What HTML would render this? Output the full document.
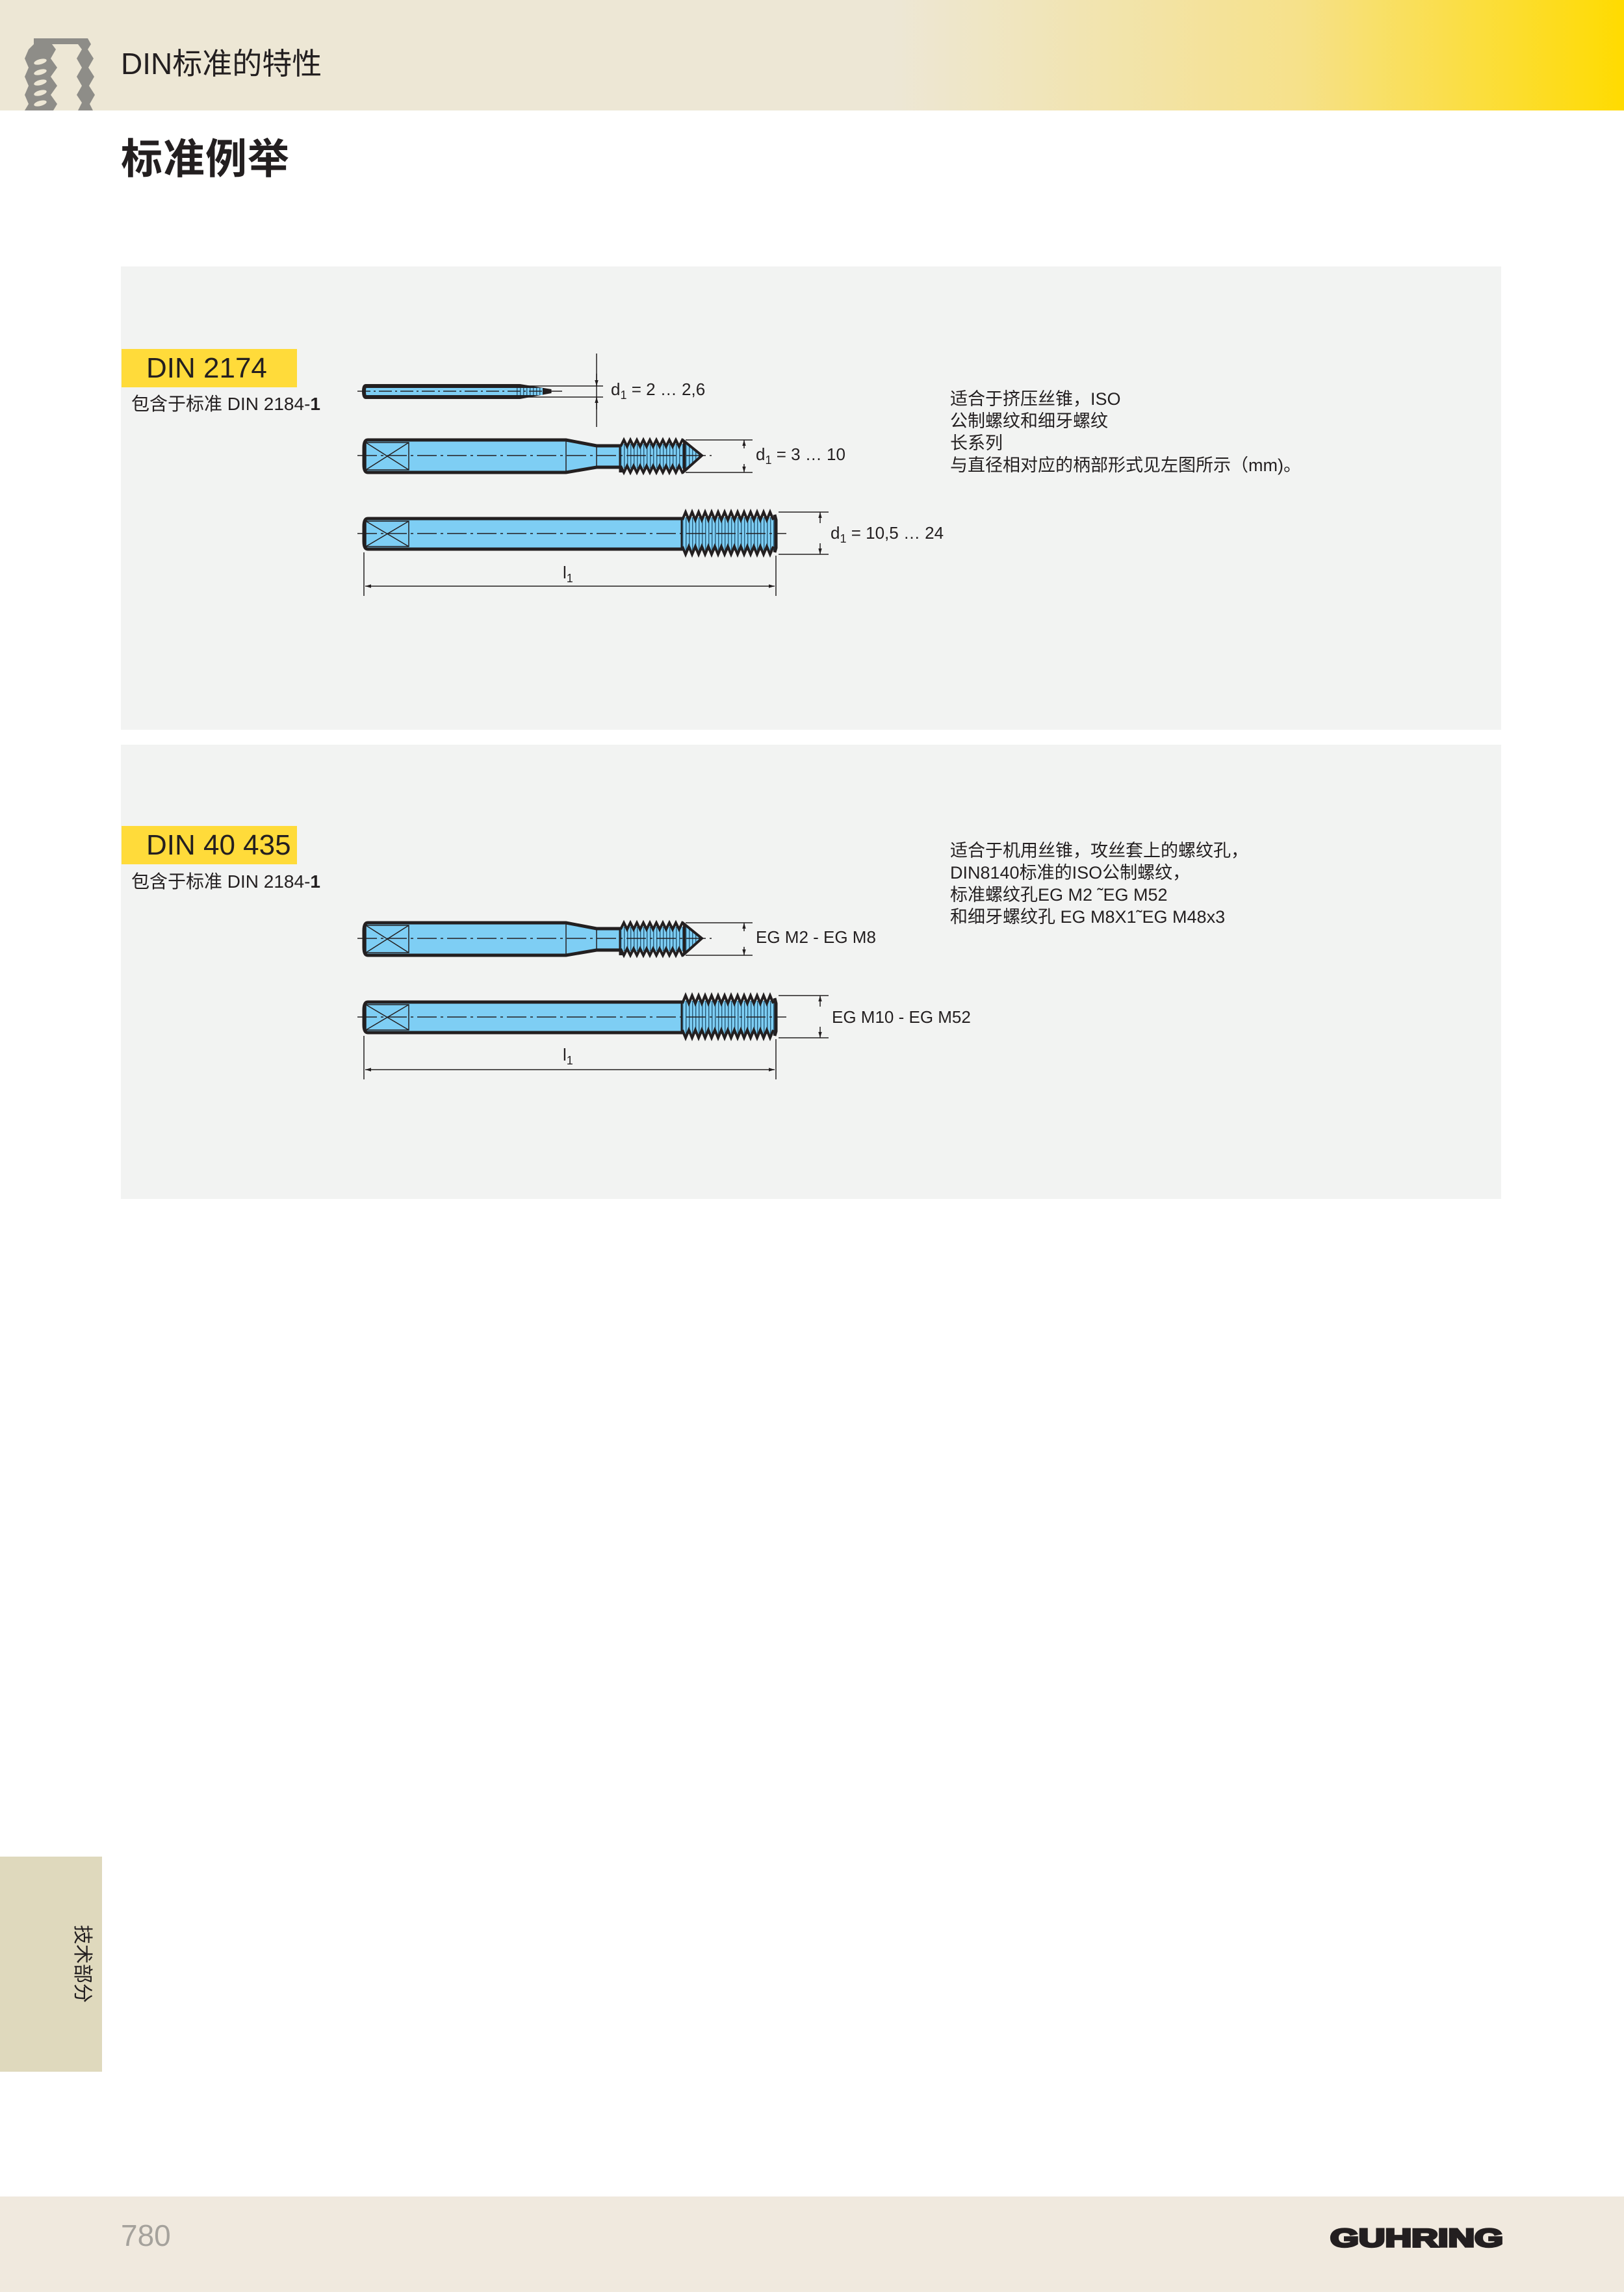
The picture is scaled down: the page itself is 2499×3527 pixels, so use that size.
<!DOCTYPE html>
<html><head><meta charset="utf-8"><style>
*{margin:0;padding:0}
body{width:2499px;height:3527px;position:relative;background:#fff;overflow:hidden;font-family:"Liberation Sans","Noto Sans CJK SC",sans-serif;color:#231f20}
.a{position:absolute;white-space:nowrap}
.hdr{left:0;top:0;width:2499px;height:170px;background:linear-gradient(90deg,#ede7d5 0%,#ede7d5 55%,#f6e18a 80%,#ffdb00 100%)}
.panel{left:186px;width:2124px;background:#f2f3f2}
.tag{background:#ffdb3a;font-size:44px;line-height:59px;padding-left:38px;width:232px;height:59px}
.sub{font-size:28px}
.rt{font-size:27px;line-height:34px}
.dim{font-size:26px}
</style></head><body>
<div class="a hdr"></div>
<svg class="a" style="left:0;top:0" width="200" height="170">
<path d="M52,59 L135,59 L140,68 L135,76 L144,90 L136,104 L145,118 L137,132 L146,146 L138,160 L143,170 L120,170 L126,158 L118,146 L126,132 L118,118 L126,104 L118,90 L126,76 L120,68 L80,68 L86,76 L78,90 L88,104 L78,118 L88,132 L78,146 L88,160 L82,170 L38,170 L44,160 L38,146 L44,132 L38,118 L44,104 L38,90 L44,76 L52,68 Z" fill="#8e8d88"/>
<g fill="#ede7d5"><ellipse cx="62" cy="95" rx="10" ry="4" transform="rotate(-15 62 95)"/><ellipse cx="62" cy="111" rx="10" ry="4" transform="rotate(-15 62 111)"/><ellipse cx="62" cy="127" rx="10" ry="4" transform="rotate(-15 62 127)"/><ellipse cx="62" cy="143" rx="10" ry="4" transform="rotate(-15 62 143)"/><ellipse cx="62" cy="159" rx="10" ry="4" transform="rotate(-15 62 159)"/></g>
</svg>
<div class="a" style="left:186px;top:62px;font-size:46px">DIN标准的特性</div>
<div class="a" style="left:186px;top:194px;font-size:64px;font-weight:bold;letter-spacing:1px">标准例举</div>

<div class="a panel" style="top:410px;height:713px"></div>
<div class="a panel" style="top:1146px;height:699px"></div>

<div class="a tag" style="left:187px;top:537px">DIN 2174</div>
<div class="a sub" style="left:202px;top:600px">包含于标准 DIN 2184-<b>1</b></div>
<div class="a tag" style="left:187px;top:1271px">DIN 40 435</div>
<div class="a sub" style="left:202px;top:1335px">包含于标准 DIN 2184-<b>1</b></div>

<div class="a rt" style="left:1462px;top:597px">适合于挤压丝锥，ISO<br>公制螺纹和细牙螺纹<br>长系列<br>与直径相对应的柄部形式见左图所示（mm)。</div>
<div class="a rt" style="left:1462px;top:1292px">适合于机用丝锥，攻丝套上的螺纹孔，<br>DIN8140标准的ISO公制螺纹，<br>标准螺纹孔EG M2 ˜EG M52<br>和细牙螺纹孔 EG M8X1˜EG M48x3</div>

<div class="a dim" style="left:940px;top:584px">d<sub style="font-size:18px">1</sub> = 2 … 2,6</div>
<div class="a dim" style="left:1163px;top:684px">d<sub style="font-size:18px">1</sub> = 3 … 10</div>
<div class="a dim" style="left:1278px;top:805px">d<sub style="font-size:18px">1</sub> = 10,5 … 24</div>
<div class="a dim" style="left:866px;top:866px">l<sub style="font-size:18px">1</sub></div>
<div class="a dim" style="left:1163px;top:1427px">EG M2 - EG M8</div>
<div class="a dim" style="left:1280px;top:1550px">EG M10 - EG M52</div>
<div class="a dim" style="left:866px;top:1608px">l<sub style="font-size:18px">1</sub></div>

<svg class="a" style="left:0;top:0" width="2499" height="1900">
<defs>
<pattern id="th" width="5" height="10" patternUnits="userSpaceOnUse"><rect width="5" height="10" fill="#7ecef4"/><rect width="1.4" height="10" fill="#2a5a78"/></pattern>
<marker id="ar" viewBox="0 0 10 10" refX="10" refY="5" markerWidth="6" markerHeight="6" orient="auto-start-reverse"><path d="M0,2 L10,5 L0,8 Z" fill="#231f20"/></marker>
<g id="t2">
<path d="M566,677 L871,677 L918,686 L955,686 L955,727 L955,719 L918,719 L871,727 L566,727 Q560,727 560,715 L560,689 Q560,677 566,677 Z" fill="#7ecef4" stroke="#231f20" stroke-width="5"/>
<rect x="955" y="683" width="98" height="38" fill="url(#th)"/>
<path d="M1053,679 L1080,701 L1053,725 Z" fill="url(#th)" stroke="#231f20" stroke-width="4"/>
<polyline fill="none" stroke="#231f20" stroke-width="4" points="955,687 960,677 965,687 970,677 975,687 980,677 985,687 990,677 995,687 1000,677 1005,687 1010,677 1015,687 1020,677 1025,687 1030,677 1035,687 1040,677 1045,687 1050,677 1054,680"/>
<polyline fill="none" stroke="#231f20" stroke-width="4" points="955,717 960,727 965,717 970,727 975,717 980,727 985,717 990,727 995,717 1000,727 1005,717 1010,727 1015,717 1020,727 1025,717 1030,727 1035,717 1040,727 1045,717 1050,727 1054,724"/>
<g stroke="#231f20" stroke-width="1.5" fill="none"><rect x="563" y="681" width="66" height="42"/><path d="M563,681 L629,723 M563,723 L629,681 M871,679 L871,725 M918,688 L918,717"/></g>
<path d="M550,701 L1095,701" stroke="#231f20" stroke-width="1.5" stroke-dasharray="30,6,4,6"/>
<g stroke="#231f20" stroke-width="1.5"><path d="M1055,677 L1158,677 M1055,727 L1158,727"/><path d="M1145,690 L1145,677" marker-end="url(#ar)"/><path d="M1145,714 L1145,727" marker-end="url(#ar)"/></g>
</g>
<g id="t3">
<path d="M566,798 L1050,798 L1050,845 L566,845 Q560,845 560,833 L560,810 Q560,798 566,798 Z" fill="#7ecef4" stroke="#231f20" stroke-width="5"/>
<rect x="1050" y="796" width="142" height="51" fill="url(#th)"/>
<path d="M1192,792 L1194,800 L1194,843 L1192,850" fill="none" stroke="#231f20" stroke-width="5"/>
<polyline fill="none" stroke="#231f20" stroke-width="4" points="1050,800 1055,788 1060,800 1065,788 1070,800 1075,788 1080,800 1085,788 1090,800 1095,788 1100,800 1105,788 1110,800 1115,788 1120,800 1125,788 1130,800 1135,788 1140,800 1145,788 1150,800 1155,788 1160,800 1165,788 1170,800 1175,788 1180,800 1185,788 1190,800"/>
<polyline fill="none" stroke="#231f20" stroke-width="4" points="1050,841 1055,853 1060,841 1065,853 1070,841 1075,853 1080,841 1085,853 1090,841 1095,853 1100,841 1105,853 1110,841 1115,853 1120,841 1125,853 1130,841 1135,853 1140,841 1145,853 1150,841 1155,853 1160,841 1165,853 1170,841 1175,853 1180,841 1185,853 1190,841"/>
<g stroke="#231f20" stroke-width="1.5" fill="none"><rect x="563" y="802" width="66" height="39"/><path d="M563,802 L629,841 M563,841 L629,802"/></g>
<path d="M550,821 L1210,821" stroke="#231f20" stroke-width="1.5" stroke-dasharray="30,6,4,6"/>
<g stroke="#231f20" stroke-width="1.5"><path d="M1198,788 L1275,788 M1198,853 L1275,853"/><path d="M1262,805 L1262,788" marker-end="url(#ar)"/><path d="M1262,836 L1262,853" marker-end="url(#ar)"/>
<path d="M560,850 L560,917 M1194,855 L1194,917"/><path d="M562,902 L1192,902" marker-start="url(#ar)" marker-end="url(#ar)"/></g>
</g>
</defs>
<path d="M563,594 L800,594 L848,602 L800,611 L563,611 Q560,611 560,602 Q560,594 563,594 Z" fill="#7ecef4" stroke="#231f20" stroke-width="6"/>
<rect x="795" y="597" width="40" height="11" fill="url(#th)"/>
<path d="M550,602 L865,602" stroke="#231f20" stroke-width="1.5" stroke-dasharray="20,5,3,5"/>
<g stroke="#231f20" stroke-width="1.5"><path d="M805,594 L928,594 M805,611 L928,611 M918,544 L918,657"/><path d="M918,575 L918,594" marker-end="url(#ar)"/><path d="M918,630 L918,611" marker-end="url(#ar)"/></g>
<use href="#t2"/>
<use href="#t3"/>
<use href="#t2" transform="translate(0,743)"/>
<use href="#t3" transform="translate(0,744)"/>
</svg>

<div class="a" style="left:0;top:2857px;width:157px;height:331px;background:#dfd9bd"></div>
<div class="a" style="left:108px;top:2962px;font-size:30px;writing-mode:vertical-rl;text-orientation:sideways">技术部分</div>

<div class="a" style="left:0;top:3380px;width:2499px;height:147px;background:#f0e9de"></div>
<div class="a" style="left:186px;top:3413px;font-size:46px;color:#a5a29c">780</div>
<svg class="a" style="left:2040px;top:3415px" width="280" height="50"><text x="7" y="42" font-family="Liberation Sans" font-weight="bold" font-size="46" textLength="266" lengthAdjust="spacingAndGlyphs" fill="#231f20" stroke="#231f20" stroke-width="4" transform="scale(1,0.85)" style="transform-origin:0 42px">GUHRING</text></svg>
</body></html>
